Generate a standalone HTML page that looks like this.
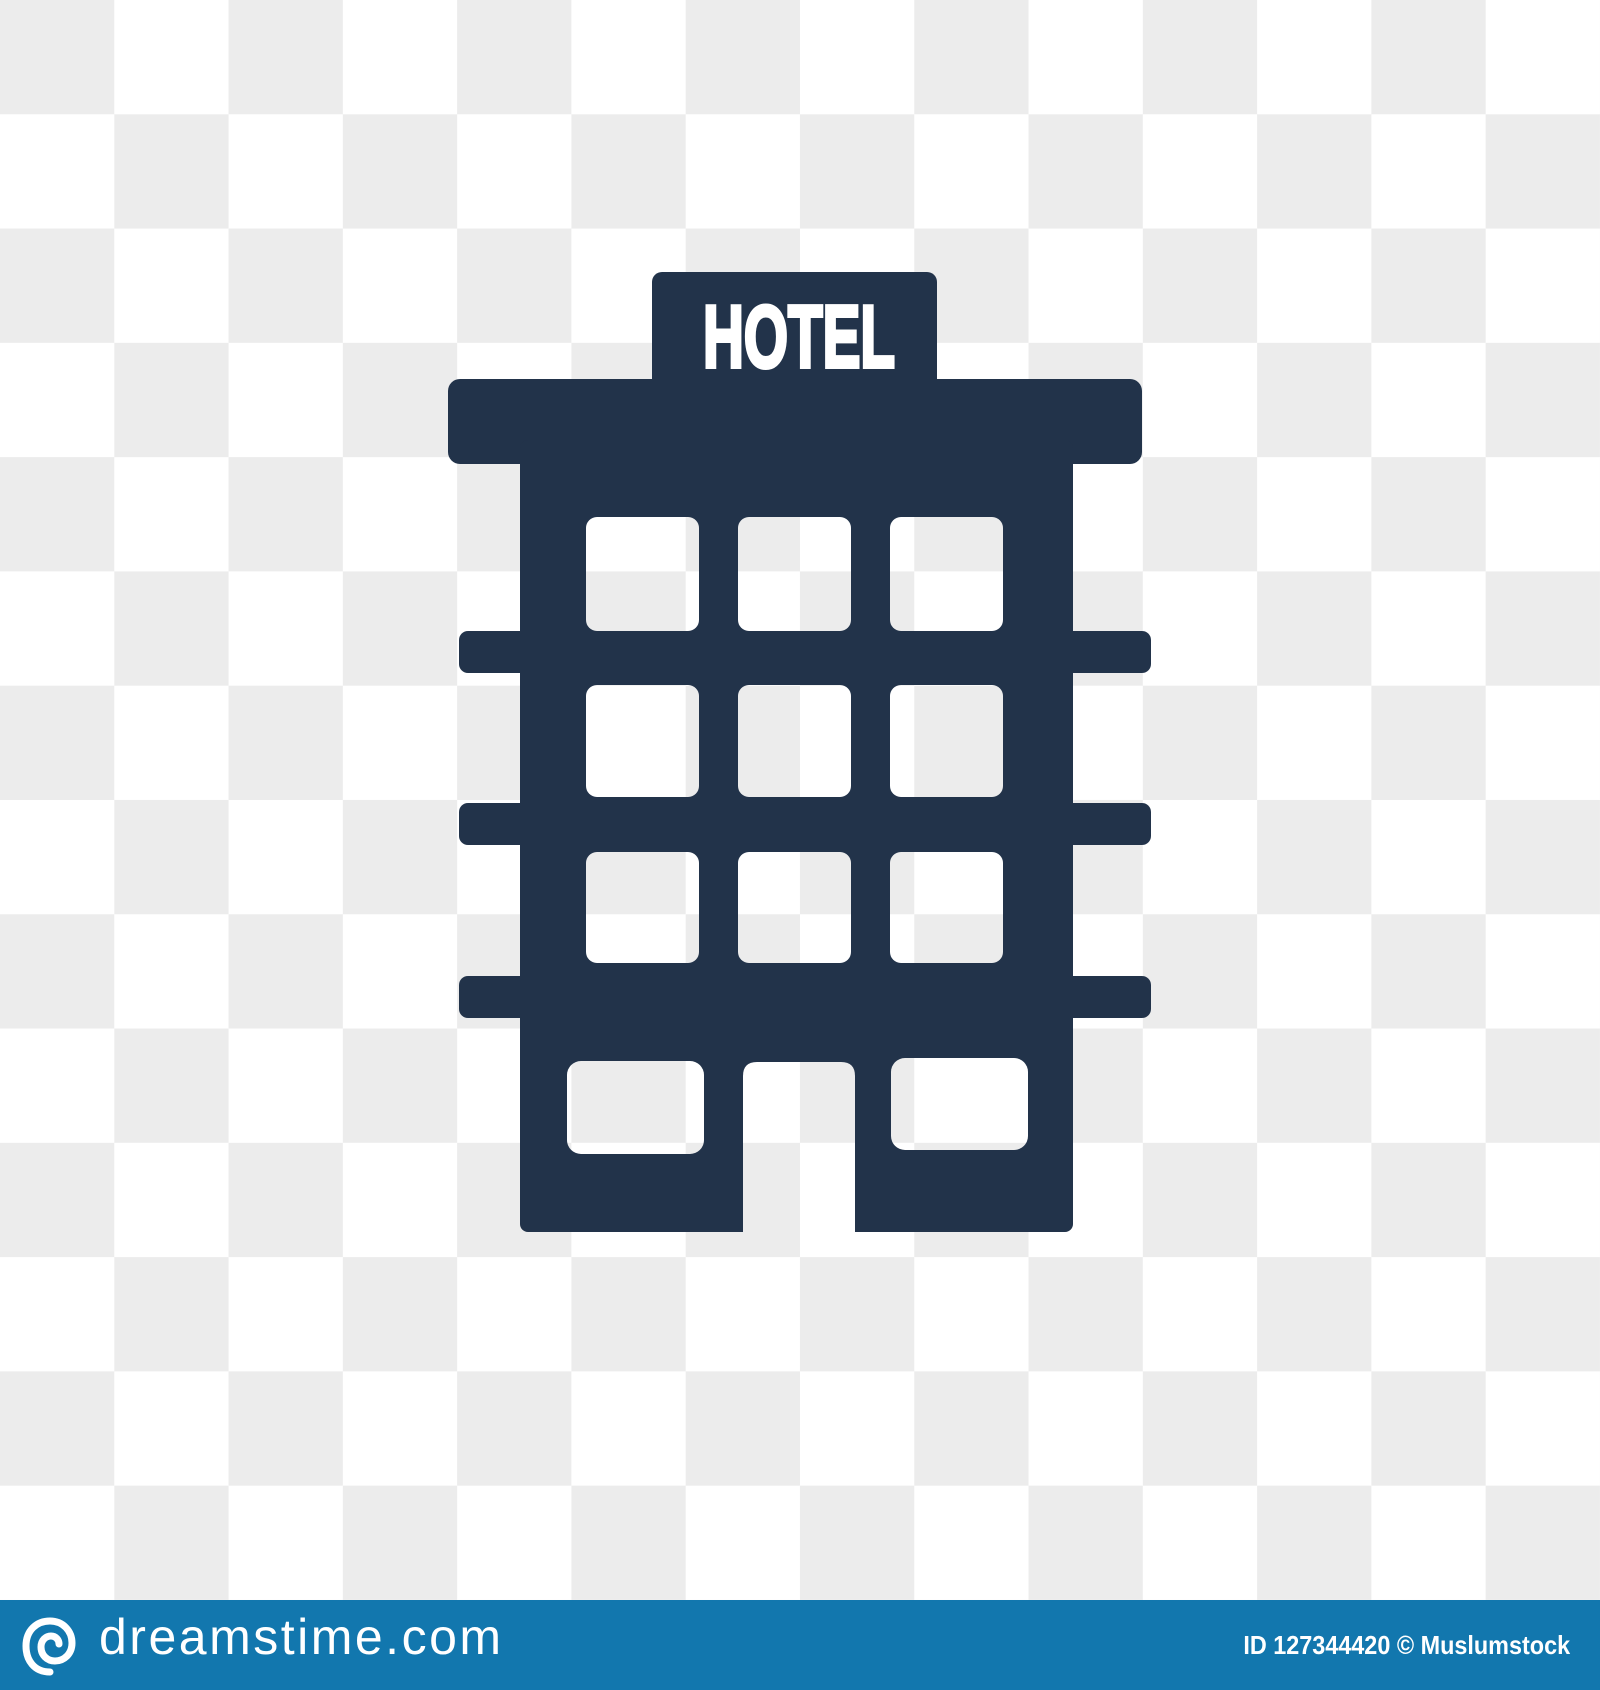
<!DOCTYPE html>
<html><head><meta charset="utf-8"><style>
html,body{margin:0;padding:0;}
body{width:1600px;height:1690px;position:relative;overflow:hidden;background:#fff;}
.chk{position:absolute;left:0;top:0;width:1600px;height:1600px;
background:conic-gradient(#fff 25%,#ececec 0 50%,#fff 0 75%,#ececec 0);
background-size:228.571px 228.571px;background-position:0 0;}
.foot{position:absolute;left:0;top:1600px;width:1600px;height:90px;background:#1277ae;}
.logo{position:absolute;left:99px;top:8px;color:#fff;font:50px "Liberation Sans",sans-serif;letter-spacing:2.5px;}
.id{position:absolute;right:30px;top:30px;color:#fff;font:bold 26px "Liberation Sans",sans-serif;transform:scaleX(.9);transform-origin:right center;white-space:nowrap;}
</style></head><body>
<div class="chk"></div>
<svg width="1600" height="1600" style="position:absolute;left:0;top:0">
<defs><mask id="m"><rect width="1600" height="1600" fill="#fff"/>
<g fill="#000">
<rect x="586" y="517" width="113" height="114" rx="11"/>
<rect x="738" y="517" width="113" height="114" rx="11"/>
<rect x="890" y="517" width="113" height="114" rx="11"/>
<rect x="586" y="685" width="113" height="112" rx="11"/>
<rect x="738" y="685" width="113" height="112" rx="11"/>
<rect x="890" y="685" width="113" height="112" rx="11"/>
<rect x="586" y="852" width="113" height="111" rx="11"/>
<rect x="738" y="852" width="113" height="111" rx="11"/>
<rect x="890" y="852" width="113" height="111" rx="11"/>
<rect x="567" y="1061" width="137" height="93" rx="14"/>
<rect x="891" y="1058" width="137" height="92" rx="14"/>
<path d="M743 1232 V1076 Q743 1062 757 1062 H841 Q855 1062 855 1076 V1232 Z"/>
</g></mask></defs>
<g fill="#22334a" mask="url(#m)">
<rect x="652" y="272" width="285" height="120" rx="10"/>
<rect x="448" y="379" width="694" height="85" rx="12"/>
<rect x="520" y="440" width="553" height="792" rx="8"/>
<rect x="459" y="631" width="692" height="42" rx="9"/>
<rect x="459" y="803" width="692" height="42" rx="9"/>
<rect x="459" y="976" width="692" height="42" rx="9"/>
</g>
<text x="799" y="367" text-anchor="middle" fill="#fff" stroke="#fff" stroke-width="4" font-family="Liberation Sans Narrow, Liberation Sans, sans-serif" font-weight="bold" font-size="88" textLength="192" lengthAdjust="spacingAndGlyphs">HOTEL</text>
</svg>
<div class="foot">
<svg width="60" height="60" style="position:absolute;left:20px;top:16px" viewBox="0 0 60 60"><path d="M30 56 C14 56 6 44 6 30 C6 14 17 5 30 5 C43 5 52 15 52 27 C52 38 44 45 35 45 C27 45 21 39 21 31 C21 24 26 20 31 20 C36 20 39 24 39 28" fill="none" stroke="#fff" stroke-width="7" stroke-linecap="round"/></svg>
<div class="logo">dreamstime.com</div>
<div class="id">ID 127344420 © Muslumstock</div>
</div>
</body></html>
